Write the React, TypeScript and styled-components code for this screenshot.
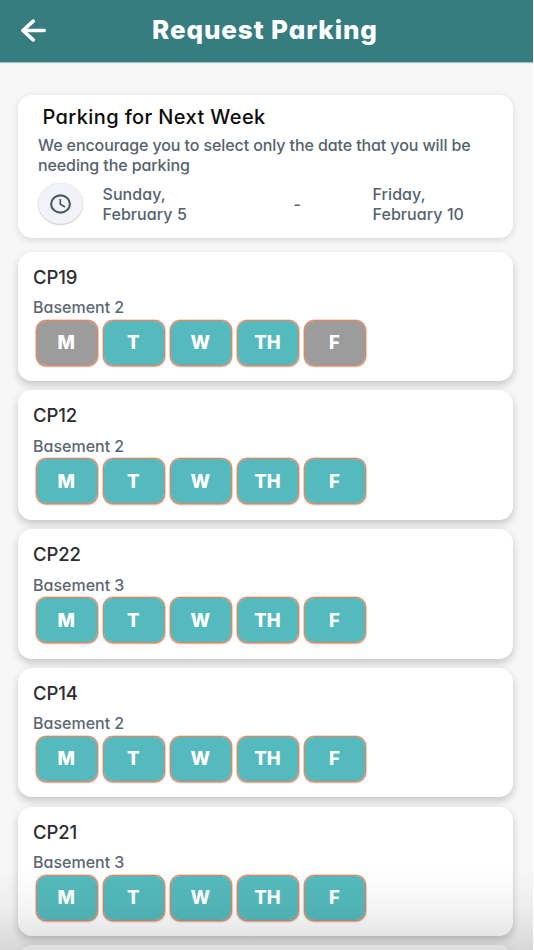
import React from "react";
import styled, { createGlobalStyle } from "styled-components";

const GlobalStyle = createGlobalStyle`
  * { box-sizing: border-box; }
  body {
    margin: 0;
    background: #fff;
    font-family: Inter, "Open Sans", sans-serif;
    font-feature-settings: "cv11";
    font-weight: 450;
    color: #55636e;
  }
`;

const Screen = styled.div`
  position: relative;
  width: 533px;
  height: 950px;
  overflow: hidden;
  display: flex;
  flex-direction: column;
  background: #f7f7f7;
`;

const Header = styled.header`
  flex: none;
  display: grid;
  grid-template-columns: 64px 1fr 64px;
  align-items: center;
  height: 62px;
  padding-bottom: 2px;
  background: #367d7f;
  box-shadow: 0 1px 1px rgba(54, 125, 127, 0.45);
`;

const BackButton = styled.button`
  display: flex;
  margin: 0 0 0 20px;
  padding: 0;
  border: 0;
  background: none;
  color: #fff;
`;

const Title = styled.h1`
  margin: 0 0 0 -3px;
  text-align: center;
  white-space: nowrap;
  color: #fff;
  font-size: 26px;
  line-height: 32px;
  font-weight: 800;
  letter-spacing: 0.9px;
`;

const Content = styled.main`
  display: flex;
  flex-direction: column;
  padding: 32.5px 20.5px 0 18px;
`;

const InfoCard = styled.section`
  height: 143px;
  margin-bottom: 14px;
  padding: 10.6px 20px 0;
  border-radius: 14px;
  background: #fff;
  box-shadow: 0 2px 7px rgba(0, 0, 0, 0.13);
`;

const InfoHeading = styled.h2`
  margin: 0 0 6.2px 4.5px;
  color: #0c0c0c;
  font-size: 20px;
  line-height: 24px;
  font-weight: 550;
  letter-spacing: 0.38px;
`;

const InfoText = styled.p`
  width: 440px;
  margin: 0 0 8px;
  font-size: 16px;
  line-height: 20px;
  letter-spacing: -0.1px;
`;

const DateRow = styled.div`
  display: grid;
  grid-template-columns: 64.5px 170px 100px 1fr;
  align-items: center;
  height: 42px;
  font-size: 16px;
  line-height: 20px;
  letter-spacing: 0.07px;
`;

const ClockBadge = styled.div`
  display: flex;
  align-items: center;
  justify-content: center;
  width: 45px;
  height: 41px;
  margin-top: -1px;
  border-radius: 50%;
  background: #f1f3f8;
  box-shadow: 0 1px 1px rgba(0, 0, 0, 0.16), 0 0 1px rgba(0, 0, 0, 0.2);
`;

const DateText = styled.div`
  white-space: pre-line;
`;

const Dash = styled.div`
  padding-left: 21px;
`;

const SlotCard = styled.section`
  height: 129.5px;
  margin-bottom: 9.25px;
  padding: 13px 15px 0;
  border-radius: 14px;
  background: #fff;
  box-shadow: 0 4px 9px rgba(0, 0, 0, 0.2);
`;

const SlotName = styled.h3`
  margin: 0 0 8.6px;
  color: #2b2d2f;
  font-size: 18.5px;
  line-height: 24px;
  font-weight: 450;
  letter-spacing: -0.1px;
`;

const SlotLevel = styled.div`
  margin-bottom: 2.5px;
  color: #5c6772;
  font-size: 16px;
  line-height: 20px;
`;

const Days = styled.div`
  display: flex;
  gap: 4.7px;
  padding-left: 2.5px;
`;

const DayButton = styled.button<{ $taken: boolean }>`
  width: 62.4px;
  height: 46px;
  padding: 0 1px 1px 0;
  border: 1px solid #e0855f;
  border-radius: 10px;
  background: ${({ $taken }) => ($taken ? "#9c9c9c" : "#54babd")};
  background-clip: padding-box;
  box-shadow: 0 0 0 0.5px rgba(224, 133, 95, 0.6), 0 1px 2px rgba(0, 0, 0, 0.25);
  color: #fff;
  font-family: inherit;
  font-feature-settings: inherit;
  font-size: 18.5px;
  font-weight: 800;
`;

const BottomFade = styled.div`
  position: absolute;
  left: 0;
  right: 0;
  bottom: 0;
  height: 84px;
  background: linear-gradient(rgba(0, 0, 0, 0), rgba(0, 0, 0, 0.04) 50%, rgba(0, 0, 0, 0.13));
  pointer-events: none;
`;

const DAYS = ["M", "T", "W", "TH", "F"];

const SLOTS: { name: string; level: string; taken: string[] }[] = [
  { name: "CP19", level: "Basement 2", taken: ["M", "F"] },
  { name: "CP12", level: "Basement 2", taken: [] },
  { name: "CP22", level: "Basement 3", taken: [] },
  { name: "CP14", level: "Basement 2", taken: [] },
  { name: "CP21", level: "Basement 3", taken: [] },
];

const BackArrow = () => (
  <svg width="27" height="24" viewBox="0 0 27 24" fill="none" stroke="currentColor" strokeWidth="3.6" strokeLinecap="round" strokeLinejoin="round">
    <path d="M13.2 3.2 2.9 12.5l10.3 9.3M3.2 12.5h21" />
  </svg>
);

const ClockIcon = () => (
  <svg width="22" height="20" viewBox="0 0 22 20" fill="none" stroke="#495963" strokeWidth="2.1">
    <ellipse cx="10.5" cy="10" rx="9.4" ry="8.6" />
    <path d="M10.3 5v5.3l4.8 2.7" strokeWidth="1.7" />
  </svg>
);

export default function App() {
  return (
    <>
      <GlobalStyle />
      <Screen>
        <Header>
          <BackButton aria-label="Back">
            <BackArrow />
          </BackButton>
          <Title>Request Parking</Title>
        </Header>
        <Content>
          <InfoCard>
            <InfoHeading>Parking for Next Week</InfoHeading>
            <InfoText>
              We encourage you to select only the date that you will be needing the parking
            </InfoText>
            <DateRow>
              <ClockBadge>
                <ClockIcon />
              </ClockBadge>
              <DateText>{"Sunday,\nFebruary 5"}</DateText>
              <Dash>-</Dash>
              <DateText>{"Friday,\nFebruary 10"}</DateText>
            </DateRow>
          </InfoCard>
          {SLOTS.map(({ name, level, taken }) => (
            <SlotCard key={name}>
              <SlotName>{name}</SlotName>
              <SlotLevel>{level}</SlotLevel>
              <Days>
                {DAYS.map((day) => (
                  <DayButton key={day} $taken={taken.includes(day)}>
                    {day}
                  </DayButton>
                ))}
              </Days>
            </SlotCard>
          ))}
          <SlotCard />
        </Content>
        <BottomFade />
      </Screen>
    </>
  );
}
